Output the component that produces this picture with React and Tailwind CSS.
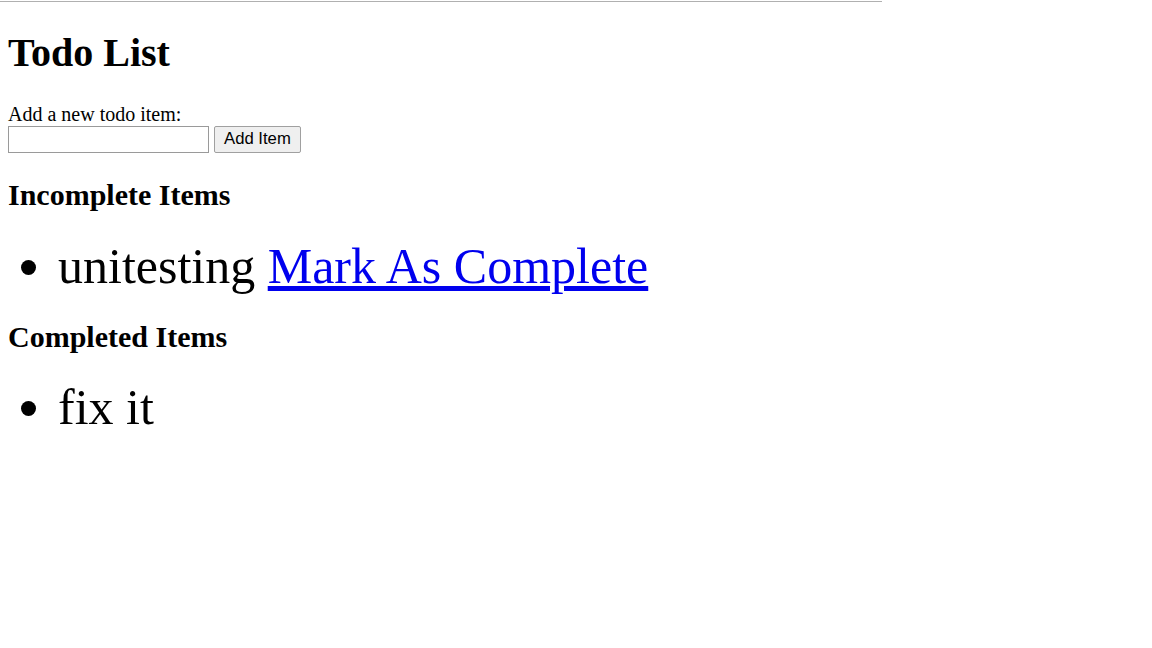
export default function App() {
  return (
    <div className="bg-white min-h-[648px] text-black" style={{ fontFamily: '"Liberation Serif", "Times New Roman", serif' }}>
      <div className="pt-px">
        <div className="w-[882px] h-px bg-[#b0b0b0]" />
      </div>
      <div className="px-2">
        <h1 className="text-[40px] font-bold leading-[46px] pt-[28px] mb-[26.8px]">Todo List</h1>
        <div className="text-[20px] leading-[23px]">Add a new todo item:</div>
        <div className="flex items-center gap-[5px]">
          <input
            type="text"
            className="w-[201px] h-[27px] border border-[#9a9a9a] bg-white px-1 outline-none"
          />
          <button
            className="h-[27px] px-[9px] border border-[#a0a0a0] rounded-[2px] bg-[#efefef] text-[16.7px] leading-none"
            style={{ fontFamily: '"Liberation Sans", Arial, sans-serif' }}
          >
            Add Item
          </button>
        </div>
        <h2 className="text-[30px] font-bold leading-[34.5px] mt-[25.5px] mb-[25.5px]">Incomplete Items</h2>
        <ul className="list-disc pl-[50px] text-[50px] leading-[57.5px]">
          <li>
            unitesting{" "}
            <a href="#" className="text-[#0000ee] underline">Mark As Complete</a>
          </li>
        </ul>
        <h2 className="text-[30px] font-bold leading-[34.5px] mt-[24px] mb-[24.5px]">Completed Items</h2>
        <ul className="list-disc pl-[50px] text-[50px] leading-[57.5px]">
          <li>fix it</li>
        </ul>
      </div>
    </div>
  );
}
